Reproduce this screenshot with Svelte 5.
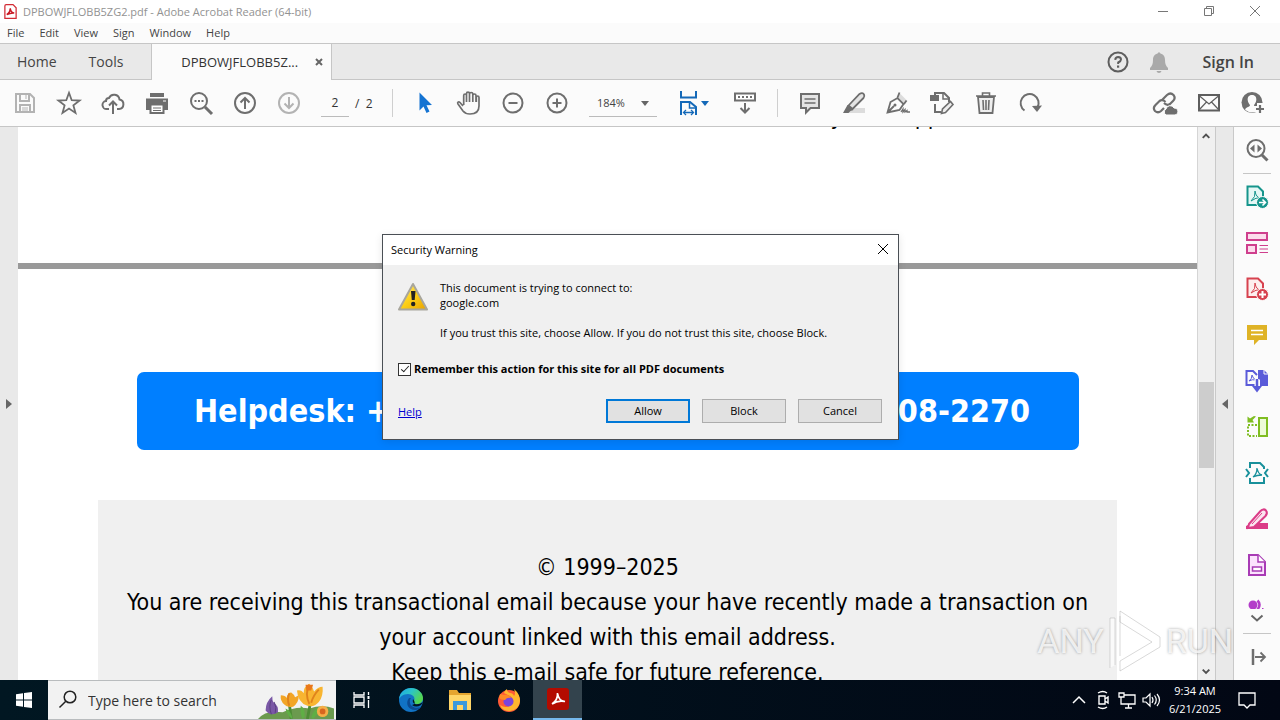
<script>
  const icons = {
    save: '<g fill="none" stroke="#b3b3b3" stroke-width="2"><path d="M3 3h14l4 4v14H3z"/><path d="M7 3v7h9V3M7 21v-7h10v7"/><path d="M13 4v4M9 17h6M9 19h6" stroke-width="1"/></g>',
    star: '<path d="M12 1.8l2.700 7.400 7.900.3-6.200 4.900 2.100 7.600-6.500-4.400-6.500 4.400 2.100-7.600L1.400 9.500l7.900-.3z" fill="none" stroke="#6e6e6e" stroke-width="1.800"/>',
    cloud: '<g fill="none" stroke="#6e6e6e" stroke-width="2"><path d="M8 18H6a4 4 0 0 1-1-8 3 3 0 0 1 3-3 5.500 5.500 0 0 1 10.500 1.500A4.800 4.800 0 0 1 18 18h-2"/><path d="M12 23V11M8 14.500l4-4 4 4"/></g>',
    print: '<path d="M5 2h14v4H5zM1 7.500h22V19h-4v-5H5v5H1z" fill="#6e6e6e"/><path d="M5.500 13.500h13V22h-13z" fill="#fff" stroke="#6e6e6e" stroke-width="2"/><path d="M8 17h8M8 19.500h8" stroke="#6e6e6e"/><path d="M18 10h3" stroke="#fff"/>',
    find: '<g fill="none" stroke="#6e6e6e"><circle cx="10" cy="10" r="8" stroke-width="2"/><path d="M16 16l7 7" stroke-width="3"/></g><path d="M5.500 9h2v2h-2zM9 9h2v2H9zM12.500 9h2v2h-2z" fill="#6e6e6e"/>',
    up: '<g fill="none" stroke="#6e6e6e" stroke-width="2"><circle cx="12" cy="12" r="10"/><path d="M12 18V7M7.500 11.500L12 7l4.500 4.500"/></g>',
    down: '<g fill="none" stroke="#b3b3b3" stroke-width="2"><circle cx="12" cy="12" r="10"/><path d="M12 6v11M7.500 12.500L12 17l4.500-4.500"/></g>',
    cursor: '<path d="M6.500 1.500v18l4-4 3 6.500 3-1.400-3-6.300 5.500-.3z" fill="#1473d2"/>',
    hand: '<path d="M6 15L3 11.500c-1.500-1.500-3 0-2 1.500l5 7c2 2.500 4 3 7 3 6 0 9-3 9-8V6.500c0-2-2.700-2-2.700 0V11M6.700 14V4.500c0-2 2.800-2 2.800 0V11M9.500 5V2.700c0-2 3-2 3 0V11M12.500 3c0-2 3.300-2 3.300 0v8M15.800 4.500c0-2 3.200-2 3.200 0V11" fill="none" stroke="#6e6e6e" stroke-width="1.700"/>',
    minus: '<g fill="none" stroke="#6e6e6e" stroke-width="2"><circle cx="12" cy="12" r="9.500"/><path d="M7.500 12h9"/></g>',
    plus: '<g fill="none" stroke="#6e6e6e" stroke-width="2"><circle cx="12" cy="12" r="9.500"/><path d="M7.500 12h9M12 7.500v9"/></g>',
    fit: '<g fill="none" stroke="#1469b8" stroke-width="2"><path d="M4 0v6.500h15V0M4 24V11h9l6 5v8"/><path d="M12.500 11v6H19" stroke-width="1.500"/><path d="M7 21.500h9" stroke-width="1.500"/><path d="M9 19l-2.500 2.500L9 24M14 19l2.500 2.500L14 24" stroke-width="1.300"/></g>',
    keyboard: '<path d="M2 2.500h20v7H2z" fill="#fff" stroke="#6e6e6e" stroke-width="2"/><path d="M5 6h14" stroke="#6e6e6e" stroke-width="2" stroke-dasharray="2 2"/><path d="M12 12v9M7.500 17l4.500 4.500 4.500-4.500" fill="none" stroke="#6e6e6e" stroke-width="2"/>',
    comment: '<path d="M3 3h18v14h-8.500L8 21.500V17H3z" fill="#e4e4e4" stroke="#6e6e6e" stroke-width="2"/><path d="M6.500 8h11M6.500 12h11" stroke="#6e6e6e" stroke-width="1.300"/>',
    marker: '<path d="M8 17h15v5H3z" fill="#dcdcdc"/><path d="M6.500 14.500L17.500 3q3-2 4.500.5 1 2-.5 3.500l-11 11z" fill="#e4e4e4" stroke="#6e6e6e" stroke-width="1.800"/><path d="M5.500 14l6 5-3 1-2 2H1z" fill="#6e6e6e"/>',
    pen: '<path d="M13.500 2l8 8-4 3-6-6z" fill="#dcdcdc"/><path d="M1.500 21.500L4.500 11l7-4 6 6-4 6zL8 15M11.500 6.500l2-5M18 13l2.500-3.500" fill="none" stroke="#6e6e6e" stroke-width="1.800"/><circle cx="9" cy="14" r="1.500" fill="#6e6e6e"/><path d="M15 21l2-3v3l2-2.500v2.500l2-1.500v1.500H24" fill="none" stroke="#6e6e6e" stroke-width="1.300"/>',
    edit: '<path d="M5 4V2h9l5 5v4M5 13v8h6" fill="none" stroke="#6e6e6e" stroke-width="2"/><path d="M13 2v6h6" fill="none" stroke="#6e6e6e" stroke-width="1.500"/><path d="M0 4h9v6H0z" fill="#6e6e6e"/><path d="M11.500 22.500l1-4.500 8-7.500 2.500 3-7.500 8z" fill="#eee" stroke="#6e6e6e" stroke-width="1.600"/>',
    trash: '<path d="M4 6h16l-1.500 16h-13z" fill="#eee" stroke="#6e6e6e" stroke-width="1.800"/><path d="M2 5h20M8.500 5V2h7v3M9 9l.5 10M12 9v10M15 9l-.5 10" fill="none" stroke="#6e6e6e" stroke-width="1.600"/>',
    rotate: '<path d="M6.500 19.500a9 9 0 1 1 13-3" fill="none" stroke="#6e6e6e" stroke-width="2"/><path d="M14 15l10-.5-5 6.500z" fill="#6e6e6e"/>',
    link: '<g fill="none" stroke="#6e6e6e" stroke-width="2.200"><path d="M9 9l5-5q3.500-3 6.500 0 2.500 3-.5 6l-3 3q-3 2-6-1"/><path d="M11 17l-3 3q-3 2.500-6 0-2.500-3 .5-6l4-4q3-2 6 1"/></g><path d="M13 24a3.500 3.500 0 0 1 0-6 4.300 4.300 0 0 1 8-1 3.500 3.500 0 0 1 1 7z" fill="#6e6e6e" stroke="#fbfbfb"/>',
    mail: '<path d="M2 4h20v15.500H2z" fill="none" stroke="#5e5e5e" stroke-width="2"/><path d="M2 4.500l10 8.500 10-8.500M2 19l7.500-8M22 19l-7.500-8" fill="none" stroke="#5e5e5e" stroke-width="1.200"/>',
    user: '<circle cx="11" cy="11.500" r="10.500" fill="#6e6e6e"/><path d="M11 4c-3.500 0-4.500 2.500-4.300 5 .2 2.500 1.500 4 2.300 5 0 2-4 2-5 4.500 4 4 10 4 13 0-1-2.500-4-2.500-4-4.500.8-1 2-2.500 2.300-5 .2-2.500-.8-5-4.300-5z" fill="#fbfbfb"/><path d="M19 12v12M13 18h12" stroke="#fbfbfb" stroke-width="6"/><path d="M19 14v8M15 18h8" stroke="#6e6e6e" stroke-width="2.200"/>',
    help: '<circle cx="12" cy="12" r="9.500" fill="none" stroke="#5e5e5e" stroke-width="2"/><path d="M9.200 9.800q.3-2.800 3-2.800 2.800.2 2.800 2.500 0 1.500-2.800 3V14" fill="none" stroke="#5e5e5e" stroke-width="2"/><path d="M11 15.500h2.200v2.200H11z" fill="#5e5e5e"/>',
    bell: '<path d="M12 2l1.500 1.500C17 4.500 18 7 18 10c0 4 1 6 3 8v2H3v-2c2-2 3-4 3-8 0-3 1-5.500 4.500-6.500zM9.500 21h5q-.5 2-2.500 2t-2.500-2z" fill="#a9a9a9"/>',
    zoomPages: '<circle cx="11" cy="10.500" r="8.500" fill="none" stroke="#6e6e6e" stroke-width="2"/><path d="M17 17l5.500 5.500" stroke="#6e6e6e" stroke-width="3"/><path d="M9.500 6.500v8L5 10.500zM12.500 6.500v8l4.500-4z" fill="#6e6e6e"/>',
    exportPdf: '<path d="M2.500 1.500H13l5 5V20H2.500z" fill="#e5f7f5" stroke="#16958c" stroke-width="2"/><path d="M6 16q5-4 4-10 1 7 6 7-5-1-10 3" fill="none" stroke="#16958c"/><circle cx="17.500" cy="17.500" r="6" fill="#16958c" stroke="#fbfbfb"/><path d="M14 17.500h6M17.500 14.500l3 3-3 3" fill="none" stroke="#fff" stroke-width="1.600"/>',
    organize: '<path d="M2 2h20v7H2zM2 14h9v8H2z" fill="#fcdcec" stroke="#cf3f8d" stroke-width="2"/><path d="M14.500 14.500H23M14.500 18H23M14.500 21.500H23" stroke="#cf3f8d"/>',
    createPdf: '<path d="M2.500 1.500H13l5 5V20H2.500z" fill="#fdeeee" stroke="#d7424f" stroke-width="2"/><path d="M6 16q5-4 4-10 1 7 6 7-5-1-10 3" fill="none" stroke="#d7424f"/><circle cx="17.500" cy="17.500" r="6" fill="#d7424f" stroke="#fbfbfb"/><path d="M14 17.500h7M17.500 14v7" stroke="#fff" stroke-width="2"/>',
    note: '<path d="M2 2h20v15h-8l-5 5v-5H2z" fill="#dfb326"/><path d="M6 7.500h12M6 11.500h12" stroke="#fff" stroke-width="1.600"/>',
    combine: '<path d="M10 16H1.500V2H8l4 4" fill="none" stroke="#5a5bd9" stroke-width="2"/><path d="M4 12q3-2 3-6 1 4 4 5-4-1-7 1" fill="none" stroke="#5a5bd9"/><path d="M13 1h6l4 4v12h-8v-6h-2z" fill="#5a5bd9"/><path d="M19 0v5h5" fill="none" stroke="#fbfbfb"/><path d="M12 10v9" stroke="#fbfbfb" stroke-width="5"/><path d="M12 10v9" stroke="#5a5bd9" stroke-width="2.500"/><path d="M7 17h10l-5 6.500z" fill="#5a5bd9"/>',
    compare: '<path d="M14 3h8v18h-8z" fill="#edfbd8" stroke="#7fbd21" stroke-width="2"/><path d="M12 10H3v11h9" fill="none" stroke="#7fbd21" stroke-width="2" stroke-dasharray="2 1.500"/><path d="M11 1.500L7.500 5 9 7.500H2.500V1.500L5 3.500 9 1z" fill="#7fbd21"/>',
    compress: '<path d="M5 7V2h10l4 4v2M5 17v5h14v-6" fill="none" stroke="#18909b" stroke-width="2"/><path d="M8 16q4-3 4-9 1 6 5 7-5 0-9 2" fill="none" stroke="#18909b" stroke-width="1.300"/><path d="M1 8l3 4-3 4M23 8l-3 4 3 4" fill="none" stroke="#18909b" stroke-width="2"/>',
    redact: '<path d="M1 22v-3l6-3h16v6z" fill="#db3c87"/><path d="M4 17L15.500 4q3-3 5.500-.5Q23 6 20.500 9L9 20l-6 1z" fill="#fbe4ef" stroke="#db3c87" stroke-width="2"/><path d="M7 17l10-11" stroke="#db3c87"/>',
    form: '<path d="M4 2h9l7 7v13H4z" fill="#fbe2fd" stroke="#a83bb5" stroke-width="2"/><path d="M13 2v7h7" fill="#fff" stroke="#a83bb5" stroke-width="1.500"/><path d="M7.500 14h9v4h-9z" fill="#fff" stroke="#a83bb5" stroke-width="1.500"/>',
    protect: '<circle cx="8" cy="6" r="4.500" fill="#b33cc9"/><path d="M12.500 1.500q4 4 0 9" fill="none" stroke="#b33cc9" stroke-width="2.500"/><path d="M17 9h1.500v1.500H17z" fill="#b33cc9"/>',
    collapse: '<path d="M8 4v16" stroke="#6e6e6e" stroke-width="2.500"/><path d="M10 12h10M15.500 7.500L20 12l-4.500 4.500" fill="none" stroke="#6e6e6e" stroke-width="1.800"/>',
    start: '<path d="M4 6.200l7-1V11.500H4zM12 5l8-1v7.500h-8zM4 12.500h7v6.300l-7-1zM12 12.500h8V20l-8-1z" fill="#fff"/>',
    search: '<g fill="none" stroke="#222" stroke-width="1.500"><circle cx="14" cy="9" r="5.800"/><path d="M9.800 13.200L3.500 19.500"/></g>',
    tasks: '<path d="M4 4v3h10V4M4 20v-3h10v3M4 9h10v6H4zM18.500 4v3M18.500 12v8" fill="none" stroke="#fff" stroke-width="1.300"/><path d="M17.500 8h2v3h-2z" fill="#fff"/>',
    edge: '<defs><linearGradient id="edgeTop" x1="0" y1="0" x2="1" y2=".5"><stop offset="0" stop-color="#1ca5e8"/><stop offset=".5" stop-color="#2bc4c8"/><stop offset="1" stop-color="#55d64f"/></linearGradient></defs><circle cx="12" cy="12" r="12" fill="#1173c5"/><path d="M0 11C1 4 6 0 12 0c7 0 12 5 12 10 0 4-3 6-6 6-3 0-4-1-3-3 2-4-2-7-6-7-5 0-8 3-9 5z" fill="url(#edgeTop)"/><path d="M10 10c-4 5-1 12 6 12 3 0 5-2 6-3-5 2-10 0-11-4-.5-2 0-4 1-5z" fill="#0b4b93"/><path d="M14 11q4 5-1 6 4 3 9 0l2-3q-4 3-8 2-3-1-2-5z" fill="#021520"/>',
    folder: '<path d="M1 2h8l2 3h12v6H1z" fill="#e5a52f"/><path d="M1 7h22v15H1z" fill="#ffd668"/><path d="M5 13h14v9h-4v-5H9v5H5z" fill="#3a99dc"/>',
    firefox: '<circle cx="12" cy="13" r="11" fill="#ff5a36"/><path d="M7 5q1-3 3-4 0 3 3 4 3 0 4 3 2-2 0-7 6 5 6 12-1 9-10 10-8 0-10-6 6 4 11 0 5-5-1-9-4-2-6-3z" fill="#ffb62e"/><circle cx="11.500" cy="13.500" r="5" fill="#7a45dc"/><path d="M3 6l4 1q5-1 7 3-4-1-6 2-4 0-6-2z" fill="#ff8a26"/>',
    acrobat: '<rect x="1" y="1" width="22" height="22" rx="3" fill="#b30b00"/><path d="M6 17q6-4 5.500-11 1 8 7.500 8.500Q12 13 6 17z" fill="none" stroke="#fff" stroke-width="1.700"/>',
    pdf: '<path d="M5 1h11l5 5v17H3V3q0-2 2-2z" fill="#fff" stroke="#d22b35" stroke-width="2"/><path d="M6 17q6-4 5.500-10 1 7 6.500 7.500-6-.5-12 2.500z" fill="none" stroke="#c81923" stroke-width="2.500"/>',
    chevronUp: '<path d="M6 15l6-6 6 6" fill="none" stroke="#fff" stroke-width="1.500"/>',
    camera: '<path d="M8 8h6v8H8zM14 11l3-2v6l-3-2M7 5q5-3 9 0M7 19q5 3 9 0" fill="none" stroke="#fff" stroke-width="1.400"/>',
    network: '<path d="M9 7h11v9H6v-4M10 20h7M13.500 16v4M4 5h5v4H4zM6 9v4" fill="none" stroke="#fff" stroke-width="1.300"/>',
    sound: '<path d="M4 10h3l4-4v12l-4-4H4zM13 9q2 3 0 6M15.500 7.500q3.500 4.500 0 9M18 6q5 6 0 12" fill="none" stroke="#fff" stroke-width="1.200"/>',
    message: '<path d="M4 5h16v12h-5l-3 3-3-3H4z" fill="none" stroke="#fff" stroke-width="1.300"/>'
  };

  const menus = ['File', 'Edit', 'View', 'Sign', 'Window', 'Help'];
  const fileTools = [['save', 'Save'], ['star', 'Star'], ['cloud', 'Upload'], ['print', 'Print'], ['find', 'Find'], ['up', 'Previous page'], ['down', 'Next page']];
  const viewTools = [['cursor', 'Select'], ['hand', 'Pan'], ['minus', 'Zoom out'], ['plus', 'Zoom in']];
  const markTools = [['comment', 'Comment'], ['marker', 'Highlight'], ['pen', 'Sign'], ['edit', 'Edit'], ['trash', 'Delete'], ['rotate', 'Rotate']];
  const shareTools = [['link', 'Share link'], ['mail', 'Mail'], ['user', 'Account']];
  const sideTools = [['exportPdf', 'Export PDF'], ['organize', 'Organize pages'], ['createPdf', 'Create PDF'], ['note', 'Comment'], ['combine', 'Combine files'], ['compare', 'Compare files'], ['compress', 'Compress PDF'], ['redact', 'Redact'], ['form', 'Prepare form']];

  let page = $state('2');
  let zoom = $state('184%');
  let remember = $state(true);
</script>

{#snippet icon(name)}
  <svg class="icon" viewBox="0 0 24 24" aria-hidden="true">{@html icons[name]}</svg>
{/snippet}

{#snippet tool([name, label])}
  <button class="tool" aria-label={label}>{@render icon(name)}</button>
{/snippet}

<div class="desktop">
  <header class="titlebar">
    <span class="app-icon">{@render icon('pdf')}</span>
    <span class="title">DPBOWJFLOBB5ZG2.pdf - Adobe Acrobat Reader (64-bit)</span>
    <div class="window-buttons">
      <button aria-label="Minimize"><svg viewBox="0 0 12 12"><path d="M1 6.500h10" /></svg></button>
      <button aria-label="Restore"><svg viewBox="0 0 12 12"><path d="M1.500 3.500h7v7h-7zM3.500 3.500v-2h7v7h-2" /></svg></button>
      <button aria-label="Close"><svg viewBox="0 0 12 12"><path d="M1 1l10 10M11 1L1 11" /></svg></button>
    </div>
  </header>

  <nav class="menubar">
    {#each menus as item}<button>{item}</button>{/each}
  </nav>

  <div class="tabs">
    <button class="tab">Home</button>
    <button class="tab">Tools</button>
    <div class="tab-open">
      <span>DPBOWJFLOBB5Z...</span>
      <button aria-label="Close tab"><svg viewBox="0 0 10 10"><path d="M2 2l6 6M8 2L2 8" /></svg></button>
    </div>
    <div class="account">
      {@render tool(['help', 'Help'])}
      {@render tool(['bell', 'Notifications'])}
      <button class="signin">Sign In</button>
    </div>
  </div>

  <div class="toolbar">
    {#each fileTools as t}{@render tool(t)}{/each}
    <div class="pager">
      <input aria-label="Page number" bind:value={page} />
      <span>/&nbsp; 2</span>
    </div>
    <span class="rule"></span>
    {#each viewTools as t}{@render tool(t)}{/each}
    <div class="zoom">
      <select aria-label="Zoom level" bind:value={zoom}>
        <option>184%</option>
        <option>100%</option>
      </select>
      <span class="caret"></span>
    </div>
    <button class="fit" aria-label="Fit width">{@render icon('fit')}<span class="caret blue"></span></button>
    {@render tool(['keyboard', 'Show toolbar below'])}
    <span class="rule"></span>
    {#each markTools as t}{@render tool(t)}{/each}
    <div class="share">
      {#each shareTools as t}{@render tool(t)}{/each}
    </div>
  </div>

  <div class="workspace">
    <button class="gutter" aria-label="Show navigation pane"><span class="arrow right"></span></button>
    <main class="document">
      <section class="page first">
        <p class="tail"><span>y</span><span>pp</span></p>
      </section>
      <section class="page second">
        <div class="banner"><span>Helpdesk: +</span><span>08-2270</span></div>
        <div class="notice">
          <p>© 1999–2025</p>
          <p>You are receiving this transactional email because your have recently made a transaction on</p>
          <p>your account linked with this email address.</p>
          <p>Keep this e-mail safe for future reference.</p>
        </div>
      </section>
    </main>
    <div class="scrollbar">
      <svg class="scroll-arrow" viewBox="0 0 18 18"><path d="M5 11l3.500-3.500L12 11" /></svg>
      <div class="track"><div class="thumb"></div></div>
      <svg class="scroll-arrow" viewBox="0 0 18 18"><path d="M5 7.500L8.500 11 12 7.500" /></svg>
    </div>
    <button class="gutter right-gutter" aria-label="Hide tools pane"><span class="arrow left"></span></button>
    <aside class="side">
      {@render tool(['zoomPages', 'Search tools'])}
      <span class="side-rule"></span>
      <div class="side-tools">
        {#each sideTools as t}{@render tool(t)}{/each}
        <div class="cut">{@render tool(['protect', 'Protect'])}</div>
      </div>
      <svg class="more" viewBox="0 0 14 8"><path d="M1.500 1.500L7 6.500l5.500-5" /></svg>
      <span class="side-rule"></span>
      {@render tool(['collapse', 'Collapse pane'])}
    </aside>

    <div class="watermark" aria-hidden="true">
      <span>ANY</span>
      <svg viewBox="0 0 54 66">
        <path d="M7 57V10H2v50M12 8v40M12 3l40 26v10L12 63V53l32-19L12 14z" />
      </svg>
      <span>RUN</span>
    </div>
  </div>

  <footer class="taskbar">
    <button class="start" aria-label="Start">{@render icon('start')}</button>
    <label class="search">
      {@render icon('search')}
      <input placeholder="Type here to search" aria-label="Type here to search" />
      <svg class="flowers" viewBox="0 0 80 40" aria-hidden="true">
        <path d="M0 40q8-10 26-7 14-7 28-4 14-5 26 0v11z" fill="#6b9a4e" />
        <path d="M8 31q0-9 7-15 0 4 1 6 6 4 5 11-7 5-13-2z" fill="#7a58a6" />
        <path d="M14 20q-3 6 0 15M17 22q3 6 1 12" fill="none" stroke="#59407f" />
        <path d="M33 24l2 16M55 24l-3 16" stroke="#4d8c35" stroke-width="3" />
        <path d="M36 38q-2-7-7-9 1 7 7 11M49 38q1-9-4-12-1 9 2 14M56 38q3-9 8-11 1 6-6 13" fill="#5fae45" />
        <path d="M24 15q5 0 6 3 1-6 5-6 3 2 4 5l4-2q0 8-6 12-7 1-9-2-5-4-4-10z" fill="#f2a526" />
        <path d="M41 10q5-1 7 3 0-7 6-10 4 4 5 8 4-5 9-5 1 10-4 16-5 6-12 4-10-3-11-16z" fill="#f8b531" />
        <path d="M33 13q-3 6 0 13M54 4q-5 9 0 20M64 9q-6 6-8 14" fill="none" stroke="#e0831b" stroke-width="2" />
        <path d="M50 4h8l-2 6h-5z" fill="#e9781c" />
        <circle cx="68" cy="32" r="6" fill="#f5ae48" /><circle cx="68" cy="32" r="3" fill="#d8651f" />
      </svg>
    </label>
    <button class="task" aria-label="Task view">{@render icon('tasks')}</button>
    <button class="task" aria-label="Edge">{@render icon('edge')}</button>
    <button class="task" aria-label="File Explorer">{@render icon('folder')}</button>
    <button class="task" aria-label="Firefox">{@render icon('firefox')}</button>
    <button class="task active" aria-label="Adobe Acrobat Reader">{@render icon('acrobat')}</button>
    <div class="tray">
      {@render tool(['chevronUp', 'Show hidden icons'])}
      {@render tool(['camera', 'Meet now'])}
      {@render tool(['network', 'Network'])}
      {@render tool(['sound', 'Volume'])}
      <div class="clock"><span>9:34 AM</span><span>6/21/2025</span></div>
      {@render tool(['message', 'Notifications'])}
    </div>
  </footer>

  <div class="dialog" role="dialog" aria-labelledby="dialog-title">
    <div class="dialog-title">
      <span id="dialog-title">Security Warning</span>
      <button aria-label="Close"><svg viewBox="0 0 12 12"><path d="M1 1l10 10M11 1L1 11" /></svg></button>
    </div>
    <div class="dialog-body">
      <div class="message">
        <svg class="warning" viewBox="0 0 32 32" aria-hidden="true">
          <defs>
            <linearGradient id="amber" x1="0" y1="0" x2="1" y2="1">
              <stop offset="0" stop-color="#ffe98a" />
              <stop offset=".5" stop-color="#fdd017" />
              <stop offset="1" stop-color="#e8a200" />
            </linearGradient>
          </defs>
          <path d="M15 4L29 29.500H1z" fill="url(#amber)" stroke="#a8a69c" stroke-width="2" stroke-linejoin="round" />
          <path d="M13 11h4.500l-.8 9h-2.900z" fill="#222" />
          <circle cx="15.200" cy="24" r="2.200" fill="#222" />
        </svg>
        <div class="lines">
          <p>This document is trying to connect to:<br />google.com</p>
          <p>If you trust this site, choose Allow. If you do not trust this site, choose Block.</p>
        </div>
      </div>
      <label class="remember">
        <input type="checkbox" bind:checked={remember} />
        <span>Remember this action for this site for all PDF documents</span>
      </label>
      <div class="actions">
        <a href="#help">Help</a>
        <button class="default">Allow</button>
        <button>Block</button>
        <button>Cancel</button>
      </div>
    </div>
  </div>
</div>

<style>
  :global(body) {
    margin: 0;
  }

  button,
  input,
  select {
    box-sizing: border-box;
    margin: 0;
    padding: 0;
    border: 0;
    border-radius: 0;
    background: none;
    font: inherit;
    color: inherit;
  }

  p {
    margin: 0;
  }

  .desktop {
    position: relative;
    display: flex;
    flex-direction: column;
    height: 100vh;
    overflow: hidden;
    font-family: "Open Sans", "Noto Sans", sans-serif;
    font-size: 12px;
    color: #444;
    background: #fbfbfb;
  }

  .icon {
    display: block;
    flex: none;
    width: 24px;
    height: 24px;
    overflow: visible;
  }

  .tool {
    flex: none;
    width: 24px;
    height: 24px;
  }

  .titlebar {
    display: flex;
    flex: none;
    align-items: center;
    height: 23px;
    padding: 0 2px 0 3px;
    background: #fff;
    color: #929292;
  }

  .app-icon .icon {
    width: 15px;
    height: 15px;
  }

  .title {
    margin-left: 5px;
    font-size: 11px;
  }

  .window-buttons {
    display: flex;
    margin-left: auto;
    height: 100%;
  }

  .window-buttons button {
    width: 46px;
    padding-bottom: 4px;
  }

  .window-buttons svg,
  .dialog-title svg {
    width: 12px;
    height: 12px;
    fill: none;
    stroke: #777;
    vertical-align: middle;
  }

  .menubar {
    display: flex;
    flex: none;
    gap: 15px;
    height: 20px;
    padding: 0 7px 2px;
    box-sizing: border-box;
    font-size: 11px;
  }

  .tabs {
    display: flex;
    flex: none;
    height: 35px;
    border-top: 1px solid #c6c6c6;
    border-bottom: 1px solid #c6c6c6;
    background: #e9e9e9;
    font-size: 14px;
  }

  .tab {
    padding: 0 15px 0 17px;
  }

  .tab-open {
    display: flex;
    align-items: center;
    justify-content: space-between;
    width: 181px;
    box-sizing: border-box;
    margin: 0 0 -1px 13px;
    padding: 0 7px 0 29px;
    border: solid #c6c6c6;
    border-width: 0 1px;
    background: #fbfbfb;
    color: #333;
    font-size: 13px;
  }

  .tab-open svg {
    display: block;
    width: 10px;
    height: 10px;
    stroke: #666;
    stroke-width: 2;
  }

  .account {
    display: flex;
    align-items: center;
    gap: 17px;
    margin-left: auto;
    padding-right: 26px;
  }

  .signin {
    margin-left: 15px;
    font-size: 16px;
    font-weight: 600;
  }

  .toolbar {
    display: flex;
    flex: none;
    align-items: center;
    gap: 20px;
    height: 46px;
    padding: 0 15px 0 13px;
    border-bottom: 1px solid #c6c6c6;
    background: #fbfbfb;
  }

  .pager {
    display: flex;
    align-items: center;
    gap: 6px;
    flex: none;
    width: 51px;
    color: #333;
    white-space: nowrap;
  }

  .pager input {
    width: 28px;
    height: 28px;
    border-bottom: 1px solid #bbb;
    text-align: center;
  }

  .rule {
    flex: none;
    width: 1px;
    height: 28px;
    background: #cfcfcf;
  }

  .zoom {
    position: relative;
    flex: none;
    width: 68px;
    border-bottom: 1px solid #bbb;
  }

  .zoom select {
    width: 100%;
    height: 27px;
    padding-left: 8px;
    appearance: none;
    font-size: 11px;
  }

  .caret {
    border: 4px solid transparent;
    border-top: 5px solid #666;
    border-bottom: 0;
  }

  .zoom .caret {
    position: absolute;
    right: 8px;
    top: 12px;
  }

  .caret.blue {
    border-top-color: #1469b8;
  }

  .fit {
    display: flex;
    align-items: center;
    flex: none;
    width: 36px;
  }

  .share {
    display: flex;
    gap: 20px;
    margin-left: auto;
  }

  .workspace {
    position: relative;
    display: flex;
    flex: 1;
    min-height: 0;
    overflow: hidden;
  }

  .gutter {
    flex: none;
    width: 18px;
    display: flex;
    align-items: center;
    justify-content: center;
    background: #e9e9e9;
  }

  .right-gutter {
    width: 19px;
    border: solid #c9c9c9;
    border-width: 0 1px;
  }

  .arrow {
    border: 5px solid transparent;
  }

  .arrow.right {
    border-left: 6px solid #666;
    border-right: 0;
  }

  .arrow.left {
    border-right: 6px solid #666;
    border-left: 0;
  }

  .document {
    flex: 1;
    min-width: 0;
    overflow: hidden;
    background: #fff;
    color: #000;
    font-family: "DejaVu Sans Condensed", "DejaVu Sans", sans-serif;
    font-size: 23px;
    line-height: 35px;
  }

  .page.first {
    height: 136px;
    overflow: hidden;
    border-bottom: 6px solid #999;
  }

  .tail {
    display: flex;
    gap: 72px;
    justify-content: flex-end;
    margin: -28px 256px 0 0;
  }

  .page.second {
    padding: 103px 80px 0;
  }

  .banner {
    display: flex;
    align-items: center;
    justify-content: space-between;
    height: 78px;
    margin: 0 38px 50px 39px;
    padding: 0 49px 0 57px;
    box-sizing: border-box;
    border-radius: 7px;
    background: #007fff;
    color: #fff;
    font-size: 32px;
    font-weight: 700;
  }

  .notice {
    min-height: 200px;
    padding-top: 50px;
    background: #f0f0f0;
    text-align: center;
    white-space: nowrap;
  }

  .scrollbar {
    display: flex;
    flex: none;
    flex-direction: column;
    width: 18px;
    box-sizing: border-box;
    border-left: 1px solid #d5d5d5;
    background: #f0f0f0;
  }

  .scroll-arrow {
    width: 17px;
    height: 18px;
    fill: none;
    stroke: #505050;
    stroke-width: 2;
  }

  .track {
    flex: 1;
    padding-top: 237px;
  }

  .thumb {
    height: 86px;
    margin: 0 1px;
    background: #cdcdcd;
  }

  .side {
    display: flex;
    flex: none;
    flex-direction: column;
    align-items: center;
    gap: 11px;
    width: 46px;
    box-sizing: border-box;
    padding: 11px 0;
    background: #fbfbfb;
  }

  .side-rule {
    flex: none;
    width: 28px;
    height: 1px;
    background: #c6c6c6;
  }

  .side-tools {
    display: flex;
    flex: 1;
    flex-direction: column;
    gap: 22px;
    min-height: 0;
    overflow: hidden;
    padding: 0 4px;
  }

  .cut {
    flex: none;
    height: 11px;
    overflow: hidden;
  }

  .more {
    flex: none;
    width: 14px;
    height: 8px;
    margin-top: -6px;
    fill: none;
    stroke: #666;
    stroke-width: 2;
  }

  .watermark {
    position: absolute;
    right: 47px;
    bottom: 6px;
    display: flex;
    align-items: center;
    gap: 4px;
    color: rgba(255, 255, 255, .8);
    font-family: Roboto, sans-serif;
    font-size: 34px;
    font-weight: 400;
    line-height: 66px;
    text-shadow: 0 0 3px rgba(0, 0, 0, .35);
    pointer-events: none;
  }

  .watermark svg {
    width: 54px;
    height: 66px;
    fill: rgba(255, 255, 255, .65);
    stroke: rgba(160, 160, 160, .4);
  }

  .taskbar {
    display: flex;
    flex: none;
    align-items: center;
    height: 40px;
    background: linear-gradient(90deg, #011722, #020714);
    color: #fff;
  }

  .start {
    width: 48px;
    display: flex;
    justify-content: center;
  }

  .search {
    display: flex;
    align-items: center;
    width: 288px;
    height: 40px;
    box-sizing: border-box;
    margin-right: 1px;
    padding-left: 8px;
    border: solid #b9bcbe;
    border-width: 1px 0;
    background: #f2f2f2;
    color: #333;
  }

  .search input {
    flex: 1;
    min-width: 0;
    height: 36px;
    margin-left: 8px;
    font-size: 14px;
  }

  .search input::placeholder {
    color: #333;
    opacity: 1;
  }

  .flowers {
    flex: none;
    width: 80px;
    height: 38px;
  }

  .task {
    display: flex;
    align-items: center;
    justify-content: center;
    width: 49px;
    height: 40px;
  }

  .task.active {
    background: #33434d;
    border-bottom: 2px solid #76b9ed;
  }

  .tray {
    display: flex;
    align-items: center;
    margin-left: auto;
    padding-right: 21px;
  }

  .clock {
    display: flex;
    flex-direction: column;
    align-items: center;
    width: 64px;
    margin-right: 8px;
    font-size: 11px;
    line-height: 18px;
  }

  .dialog {
    position: absolute;
    top: 234px;
    left: calc(50% - 258px);
    width: 517px;
    box-sizing: border-box;
    border: 1px solid #4a4f55;
    background: #f0f0f0;
    color: #000;
    font-size: 11px;
    box-shadow: 0 2px 8px rgba(0, 0, 0, .1);
  }

  .dialog-title {
    display: flex;
    align-items: center;
    justify-content: space-between;
    height: 30px;
    padding: 0 9px 2px 8px;
    box-sizing: border-box;
    background: #fff;
  }

  .dialog-title svg {
    display: block;
    stroke: #000;
  }

  .dialog-body {
    padding: 15px 16px 16px 15px;
  }

  .message {
    display: flex;
    gap: 10px;
  }

  .warning {
    flex: none;
    width: 32px;
    height: 32px;
  }

  .lines {
    display: flex;
    flex-direction: column;
    gap: 15px;
    line-height: 15px;
    white-space: nowrap;
  }

  .remember {
    display: flex;
    align-items: center;
    gap: 3px;
    margin: 19px 0 20px;
    line-height: 20px;
    font-weight: 700;
    white-space: nowrap;
  }

  .remember input {
    width: 13px;
    height: 13px;
    border: 1px solid #333;
    background: #fff;
    appearance: none;
  }

  .remember input:checked::after {
    content: "";
    display: block;
    width: 3px;
    height: 7px;
    margin-left: 4px;
    border: solid #222;
    border-width: 0 1px 1px 0;
    transform: rotate(42deg);
  }

  .actions {
    display: flex;
    align-items: center;
    gap: 12px;
  }

  .actions a {
    margin-right: auto;
    color: #0000d0;
  }

  .actions button {
    width: 84px;
    height: 24px;
    padding-bottom: 2px;
    border: 1px solid #adadad;
    background: #e1e1e1;
  }

  .actions .default {
    border: 2px solid #0078d7;
  }
</style>
